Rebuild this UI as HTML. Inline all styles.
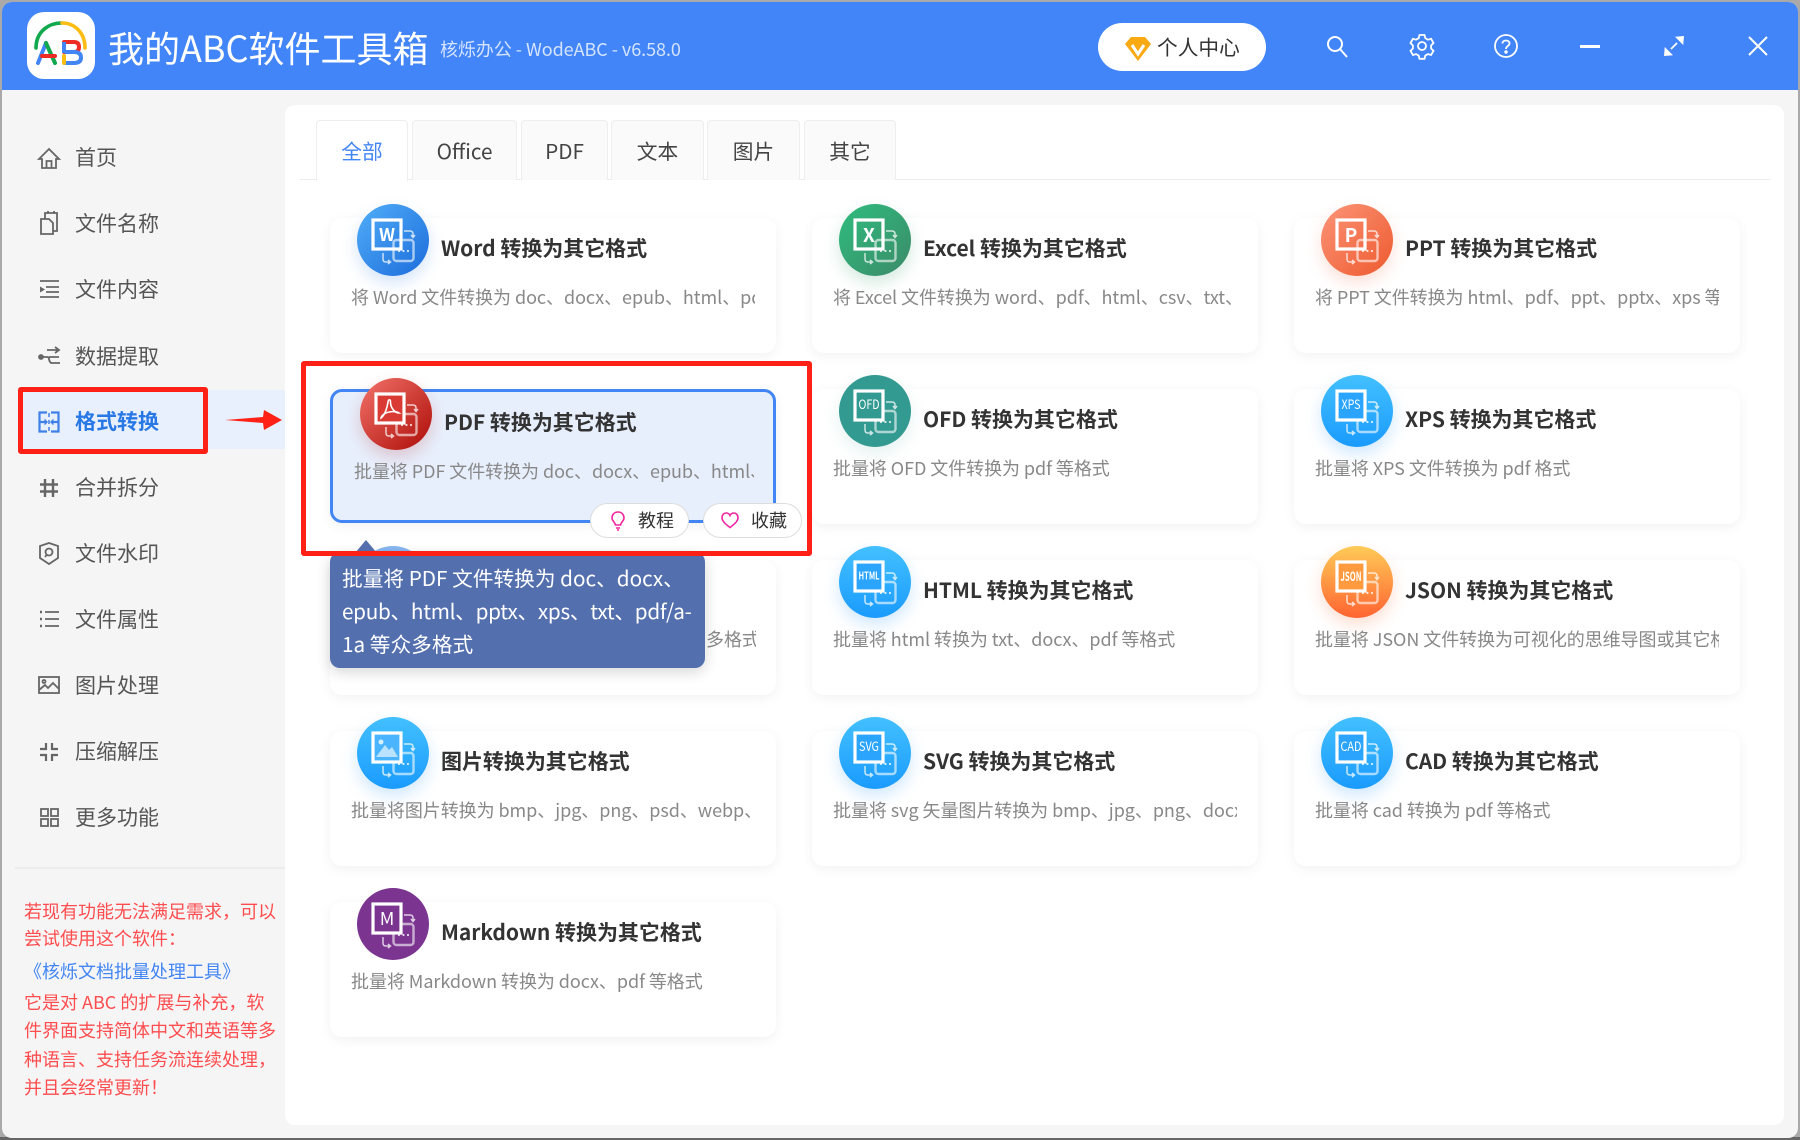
<!DOCTYPE html>
<html lang="zh-CN">
<head>
<meta charset="utf-8">
<title>我的ABC软件工具箱</title>
<style>
*{box-sizing:border-box;margin:0;padding:0}
html,body{width:1800px;height:1140px;overflow:hidden;background:#a9a9a9;font-family:"Noto Sans CJK SC","Liberation Sans",sans-serif}
#strip{position:absolute;left:0;top:1137px;width:1800px;height:3px;background:#666}
#win{position:absolute;left:2px;top:2px;width:1796px;height:1136px;background:#f5f5f5;border-radius:10px;overflow:hidden}
.a{position:absolute;white-space:nowrap}
svg{display:block;overflow:visible}
#hd{position:absolute;left:0;top:0;width:1800px;height:90px;background:#4285f8}
#root{position:absolute;left:0;top:0;width:1800px;height:1140px}
.nav{position:absolute;left:75px;font-size:21px;line-height:30px;color:#555;white-space:nowrap}
.ni{position:absolute;left:37px;width:24px;height:24px;fill:none;stroke:#666;stroke-width:1.8}
.tab{position:absolute;top:120px;height:60px;background:#fafafa;border:1px solid #eee;border-bottom:none;border-radius:4px 4px 0 0;font-size:20.7px;line-height:58px;text-align:center;color:#444}
.card{position:absolute;width:446px;height:135px;background:#fff;border-radius:12px;box-shadow:0 3px 12px rgba(0,0,0,.055)}
.ic{position:absolute;width:72px;height:72px;border-radius:50%}
.ic svg{position:absolute;left:0;top:0;width:72px;height:72px}
.t{position:absolute;font-size:21px;font-weight:700;color:#333;line-height:30px;white-space:nowrap;letter-spacing:-.04px}
.d{position:absolute;width:404px;overflow:hidden;font-size:18px;color:#888;line-height:28px;white-space:nowrap;letter-spacing:-.06px}
.blue{background:linear-gradient(180deg,#43c0ff,#1a9bfd);box-shadow:0 7px 16px rgba(40,150,250,.22)}
.red{position:absolute;left:0;width:1800px;font-size:18px;line-height:28px;color:#ff4d4f;white-space:nowrap;padding-left:24px}
.rb{position:absolute;border:5px solid #ff2116;border-radius:3px}
.pill{position:absolute;top:503px;height:35px;background:#fff;border:1px solid #ddd;border-radius:18px;font-size:18px;line-height:33px;color:#333;white-space:nowrap}
.lb{font-family:"Noto Sans CJK SC",sans-serif;fill:#fff}
</style>
</head>
<body>
<svg width="0" height="0" style="position:absolute">
<defs>
<symbol id="arr" viewBox="0 0 72 72">
<rect x="36.5" y="36" width="20" height="21" rx="3" fill="none" stroke="#fff" stroke-opacity=".6" stroke-width="2.4"/>
<path d="M47 27h6q3 0 3 3v3M54 31l2 2.500 2-2.500" fill="none" stroke="#fff" stroke-opacity=".75" stroke-width="1.500"/>
<path d="M26 49v6q0 3 3 3h4M31 56l2.500 2-2.500 2" fill="none" stroke="#fff" stroke-opacity=".75" stroke-width="1.500"/>
<circle cx="42" cy="47" r="1.100" fill="#fff" fill-opacity=".8"/><circle cx="46.500" cy="47" r="1.100" fill="#fff" fill-opacity=".8"/><circle cx="51" cy="47" r="1.100" fill="#fff" fill-opacity=".8"/>
</symbol>
</defs>
</svg>
<div id="strip"></div>
<div id="win">
<div id="root" style="left:-2px;top:-2px">
<div id="hd"></div>

<!-- logo -->
<svg class="a" style="left:27px;top:12px" width="68" height="67" viewBox="0 0 68 67">
<rect width="68" height="67" rx="17" fill="#fff"/>
<path d="M9 36C9 20 21 11 35 11" fill="none" stroke="#12a84d" stroke-width="3.600" stroke-linecap="round"/>
<path d="M35 11C48 11 58 21 58 36" fill="none" stroke="#fbbd12" stroke-width="3.600" stroke-linecap="round"/>
<path d="M11 51L19 31" fill="none" stroke="#4285f4" stroke-width="4" stroke-linecap="round"/>
<path d="M19 31L28 51" fill="none" stroke="#12a84d" stroke-width="4" stroke-linecap="round"/>
<path d="M15 44H28" fill="none" stroke="#ee2b24" stroke-width="4" stroke-linecap="round"/>
<path d="M37 30H47Q52 30 52 35T47 40H37" fill="none" stroke="#ee2b24" stroke-width="4" stroke-linecap="round"/>
<path d="M37 30V41" fill="none" stroke="#4285f4" stroke-width="4"/>
<path d="M39 40H47Q54 40 54 45.500T47 51H39" fill="none" stroke="#4285f4" stroke-width="4" stroke-linecap="round"/>
<path d="M37 44V51" fill="none" stroke="#fbbd12" stroke-width="4" stroke-linecap="round"/>
</svg>
<div class="a" style="left:108px;top:22px;font-size:36px;line-height:50px;color:#fff">我的ABC软件工具箱</div>
<div class="a" style="left:440px;top:35px;font-size:18px;line-height:28px;color:rgba(255,255,255,.78);letter-spacing:-.05px">核烁办公 - WodeABC - v6.58.0</div>

<!-- vip -->
<div class="a" style="left:1098px;top:23px;width:168px;height:48px;background:#fff;border-radius:24px"></div>
<svg class="a" style="left:1124px;top:36px" width="28" height="26" viewBox="0 0 28 26"><path d="M7 1H21L27 8 14 25 1 8Z" fill="#f9a911"/><path d="M8 9L14 18 20 9" fill="none" stroke="#fff" stroke-width="3"/></svg>
<div class="a" style="left:1157px;top:31px;font-size:20.7px;line-height:30px;color:#333">个人中心</div>

<!-- window icons -->
<svg class="a" style="left:1325px;top:34px" width="24" height="24" viewBox="0 0 24 24" fill="none" stroke="#fff" stroke-width="2"><circle cx="10" cy="10" r="7"/><path d="M15 15L22 23"/></svg>
<svg class="a" style="left:1410px;top:34px" width="24" height="24" viewBox="0 0 24 24" fill="none" stroke="#fff" stroke-width="1.800"><path d="M9.500 1.500h5l.8 3.200 2.600 1.500 3.200-.9 2.400 4.200-2.400 2.500 0 3-0 0 2.400 2.300-2.400 4.200-3.200-.9-2.600 1.500-.8 3.200h-5l-.8-3.200-2.600-1.500-3.200.9L.5 17.300l2.400-2.300v-3L.5 9.500 2.900 5.300l3.200.9 2.600-1.500z" transform="translate(0 -.5)"/><circle cx="12" cy="12" r="4"/></svg>
<svg class="a" style="left:1494px;top:34px" width="24" height="24" viewBox="0 0 24 24" fill="none" stroke="#fff" stroke-width="1.800"><circle cx="12" cy="12" r="11"/><path d="M8.500 9.500C8.500 5.500 15.500 5.500 15.500 9.500 15.500 12 12 12 12 15"/><circle cx="12" cy="18" r=".8" fill="#fff"/></svg>
<div class="a" style="left:1580px;top:45px;width:20px;height:2.500px;background:#fff"></div>
<svg class="a" style="left:1662px;top:34px" width="24" height="24" viewBox="0 0 24 24" fill="none" stroke="#fff" stroke-width="1.800"><path d="M15 9L9 15"/><path d="M15 3.500L21 3 20.500 9Z" fill="#fff"/><path d="M3.500 15L3 21 9 20.500Z" fill="#fff"/></svg>
<svg class="a" style="left:1748px;top:36px" width="20" height="20" viewBox="0 0 20 20" fill="none" stroke="#fff" stroke-width="2"><path d="M1 1L19 19M19 1L1 19"/></svg>

<!-- sidebar -->
<div class="a" style="left:18px;top:390px;width:267px;height:59px;background:#e8f0fe;border-radius:8px 0 0 8px"></div>

<svg class="ni" style="top:146px" viewBox="0 0 24 24"><path d="M2 13L12 3 22 13H19V22H5V13Z"/><path d="M9.500 22V15H14.500V22"/></svg>
<div class="nav" style="top:141.500px">首页</div>
<svg class="ni" style="top:211px" viewBox="0 0 24 24"><path d="M4 8H12L16 12V23H4Z"/><path d="M8 8V2H20V20H16"/><path d="M11 2V0M17 2V0"/></svg>
<div class="nav" style="top:207.500px">文件名称</div>
<svg class="ni" style="top:277px" viewBox="0 0 24 24"><path d="M3 4H22M9 10H22M9 15H22M3 20H22"/><path d="M3 9.500L8 12.500 3 15.500Z" fill="#666" stroke="none"/></svg>
<div class="nav" style="top:273.500px">文件内容</div>
<svg class="ni" style="top:344px" viewBox="0 0 24 24"><path d="M10 6H22M18 3L22 6 18 9M4 13H10Q12 13 12 15T14 19H23M12 13H22"/><circle cx="4" cy="13" r="2" fill="#666"/></svg>
<div class="nav" style="top:340.500px">数据提取</div>
<svg class="ni" style="top:410px;stroke:#3f80e6;stroke-width:2.200" viewBox="0 0 24 24"><path d="M10 2.500H2.500V21.500H10M14 2.500H21.500V21.500H14"/><path d="M12 3V7M12 10V14M12 17V21" stroke-width="1.500"/><path d="M3 12H8M21 12H16"/><path d="M7.500 8.500L11 12 7.500 15.500ZM16.500 8.500L13 12 16.500 15.500Z" fill="#3f80e6" stroke="none"/></svg>
<div class="nav" style="top:405.500px;font-weight:700;color:#2878e6">格式转换</div>
<svg class="ni" style="top:476px;stroke-width:2.400" viewBox="0 0 24 24"><path d="M8 3V21M16 3V21M3 8.500H21M3 15.500H21"/></svg>
<div class="nav" style="top:471.500px">合并拆分</div>
<svg class="ni" style="top:541px" viewBox="0 0 24 24"><path d="M12 2L21 5V17L12 23 3 17V5Z"/><circle cx="12" cy="11" r="3.500"/><path d="M9.500 14L8 16"/></svg>
<div class="nav" style="top:537.500px">文件水印</div>
<svg class="ni" style="top:607px" viewBox="0 0 24 24"><path d="M8 5H22M8 12H22M8 19H22"/><path d="M3 5H5M3 12H5M3 19H5" stroke-width="2.400"/></svg>
<div class="nav" style="top:603.500px">文件属性</div>
<svg class="ni" style="top:673px" viewBox="0 0 24 24"><rect x="2" y="4" width="20" height="16"/><circle cx="7" cy="8.500" r="1.500"/><path d="M2 17L8 12 11 15 16 10 22 16"/></svg>
<div class="nav" style="top:670px">图片处理</div>
<svg class="ni" style="top:740px;stroke-width:2.200" viewBox="0 0 24 24"><path d="M9 3V9H3M15 3V9H21M3 15H9V21M21 15H15V21"/></svg>
<div class="nav" style="top:735.500px">压缩解压</div>
<svg class="ni" style="top:805px" viewBox="0 0 24 24"><rect x="4" y="4" width="7" height="7"/><rect x="14" y="4" width="7" height="7"/><rect x="4" y="14" width="7" height="7"/><rect x="14" y="14" width="7" height="7"/></svg>
<div class="nav" style="top:801.500px">更多功能</div>

<div class="a" style="left:15px;top:867px;width:270px;height:2px;background:#ececec"></div>
<div class="red" style="top:897px">若现有功能无法满足需求，可以</div>
<div class="red" style="top:924px">尝试使用这个软件：</div>
<div class="red" style="top:957px;color:#4285f4;padding-left:24px">《核烁文档批量处理工具》</div>
<div class="red" style="top:988px">它是对 ABC 的扩展与补充，软</div>
<div class="red" style="top:1016px">件界面支持简体中文和英语等多</div>
<div class="red" style="top:1045px">种语言、支持任务流连续处理，</div>
<div class="red" style="top:1073px">并且会经常更新！</div>

<!-- main panel -->
<div class="a" style="left:285px;top:105px;width:1499px;height:1020px;background:#fff;border-radius:10px"></div>
<div class="a" style="left:300px;top:179px;width:1470px;height:1px;background:#ececec"></div>
<div class="tab" style="left:316px;width:92px;background:#fff;color:#4285f4;height:61px;z-index:1">全部</div>
<div class="tab" style="left:412px;width:105px">Office</div>
<div class="tab" style="left:521px;width:87px">PDF</div>
<div class="tab" style="left:611px;width:93px">文本</div>
<div class="tab" style="left:707px;width:93px">图片</div>
<div class="tab" style="left:804px;width:92px">其它</div>

<!-- row 1 -->
<div class="card" style="left:330px;top:218px"></div>
<div class="ic" style="left:357px;top:204px;background:linear-gradient(135deg,#52aef8,#1b6cdb);box-shadow:0 7px 16px rgba(40,120,230,.2)"><svg viewBox="0 0 72 72"><use href="#arr" width="72" height="72"/><rect x="16" y="16" width="28" height="29" fill="none" stroke="#fff" stroke-width="3.200"/><text class="lb" x="30" y="37" text-anchor="middle" font-size="17.500" font-weight="700">W</text></svg></div>
<div class="t" style="left:441px;top:233px">Word 转换为其它格式</div>
<div class="d" style="left:351px;top:283px">将 Word 文件转换为 doc、docx、epub、html、pdf 等众多格式</div>

<div class="card" style="left:812px;top:218px"></div>
<div class="ic" style="left:839px;top:204px;background:linear-gradient(135deg,#2fbd7f,#3b8a68);box-shadow:0 7px 16px rgba(40,150,100,.2)"><svg viewBox="0 0 72 72"><use href="#arr" width="72" height="72"/><rect x="16" y="16" width="28" height="29" fill="none" stroke="#fff" stroke-width="3.200"/><text class="lb" x="30" y="38" text-anchor="middle" font-size="19" font-weight="700">X</text></svg></div>
<div class="t" style="left:923px;top:233px">Excel 转换为其它格式</div>
<div class="d" style="left:833px;top:283px">将 Excel 文件转换为 word、pdf、html、csv、txt、ods 等众多格式</div>

<div class="card" style="left:1294px;top:218px"></div>
<div class="ic" style="left:1321px;top:204px;background:linear-gradient(135deg,#fb9478,#ee5a2e);box-shadow:0 7px 16px rgba(240,100,60,.2)"><svg viewBox="0 0 72 72"><use href="#arr" width="72" height="72"/><rect x="16" y="16" width="28" height="29" fill="none" stroke="#fff" stroke-width="3.200"/><text class="lb" x="30" y="38" text-anchor="middle" font-size="19" font-weight="700">P</text></svg></div>
<div class="t" style="left:1405px;top:233px">PPT 转换为其它格式</div>
<div class="d" style="left:1315px;top:283px">将 PPT 文件转换为 html、pdf、ppt、pptx、xps 等众多格式</div>

<!-- row 2 -->
<div class="card" style="left:330px;top:389px;width:446px;height:134px;background:#e8effc;border:3px solid #4285f4"></div>
<div class="ic" style="left:360px;top:378px;background:linear-gradient(135deg,#f2736b,#ad0c06);box-shadow:0 7px 16px rgba(170,30,30,.2)"><svg viewBox="0 0 72 72"><use href="#arr" width="72" height="72"/><rect x="16" y="16" width="28" height="29" fill="#d93a34" stroke="#fff" stroke-width="3.200"/><path d="M21 40C25 37 27 30 28 24 28.500 21 30.500 21 30.500 24 30.500 30 35 35 39 35 36 33 29 33 24 36 22 37.500 21 39.500 21 40Z" fill="none" stroke="#fff" stroke-width="1.600"/></svg></div>
<div class="t" style="left:444px;top:407px">PDF 转换为其它格式</div>
<div class="d" style="left:354px;top:457px;width:400px">批量将 PDF 文件转换为 doc、docx、epub、html、pptx、xps</div>

<div class="card" style="left:812px;top:389px"></div>
<div class="ic" style="left:839px;top:375px;background:#339a92;box-shadow:0 7px 16px rgba(40,150,140,.12)"><svg viewBox="0 0 72 72"><use href="#arr" width="72" height="72"/><rect x="16" y="16" width="28" height="29" fill="#339a92" stroke="#fff" stroke-width="3.200"/><text class="lb" x="30" y="34" text-anchor="middle" font-size="13" textLength="21" lengthAdjust="spacingAndGlyphs">OFD</text></svg></div>
<div class="t" style="left:923px;top:404px">OFD 转换为其它格式</div>
<div class="d" style="left:833px;top:454px">批量将 OFD 文件转换为 pdf 等格式</div>

<div class="card" style="left:1294px;top:389px"></div>
<div class="ic blue" style="left:1321px;top:375px"><svg viewBox="0 0 72 72"><use href="#arr" width="72" height="72"/><rect x="16" y="16" width="28" height="29" fill="#2aa4fd" stroke="#fff" stroke-width="3.200"/><text class="lb" x="30" y="34" text-anchor="middle" font-size="13" textLength="19" lengthAdjust="spacingAndGlyphs">XPS</text></svg></div>
<div class="t" style="left:1405px;top:404px">XPS 转换为其它格式</div>
<div class="d" style="left:1315px;top:454px">批量将 XPS 文件转换为 pdf 格式</div>

<!-- row 3 -->
<div class="card" style="left:330px;top:560px"></div>
<div class="ic" style="left:357px;top:546px;background:linear-gradient(180deg,#8ab8f2,#5a9bf0)"></div>
<div class="d" style="left:706px;top:625px;width:50px">多格式</div>

<div class="card" style="left:812px;top:560px"></div>
<div class="ic blue" style="left:839px;top:546px"><svg viewBox="0 0 72 72"><use href="#arr" width="72" height="72"/><rect x="16" y="16" width="28" height="29" fill="#2aa4fd" stroke="#fff" stroke-width="3.200"/><text class="lb" x="30" y="33.500" text-anchor="middle" font-size="10.500" font-weight="700" textLength="21" lengthAdjust="spacingAndGlyphs">HTML</text></svg></div>
<div class="t" style="left:923px;top:575px">HTML 转换为其它格式</div>
<div class="d" style="left:833px;top:625px">批量将 html 转换为 txt、docx、pdf 等格式</div>

<div class="card" style="left:1294px;top:560px"></div>
<div class="ic" style="left:1321px;top:546px;background:linear-gradient(180deg,#ffcb57,#ff6432);box-shadow:0 7px 16px rgba(250,110,50,.22)"><svg viewBox="0 0 72 72"><use href="#arr" width="72" height="72"/><rect x="16" y="16" width="28" height="29" fill="#ff9a3e" stroke="#fff" stroke-width="3.200"/><text class="lb" x="30" y="35" text-anchor="middle" font-size="13" font-weight="700" textLength="21" lengthAdjust="spacingAndGlyphs">JSON</text></svg></div>
<div class="t" style="left:1405px;top:575px">JSON 转换为其它格式</div>
<div class="d" style="left:1315px;top:625px">批量将 JSON 文件转换为可视化的思维导图或其它格式文件</div>

<!-- row 4 -->
<div class="card" style="left:330px;top:731px"></div>
<div class="ic blue" style="left:357px;top:717px"><svg viewBox="0 0 72 72"><use href="#arr" width="72" height="72"/><rect x="16" y="16" width="28" height="29" fill="#4bb4ff" stroke="#fff" stroke-width="3.200"/><circle cx="24" cy="25" r="2.500" fill="#d4efff"/><path d="M19 40L28 28 32 33 35 30 41 40Z" fill="#b9e3ff"/></svg></div>
<div class="t" style="left:441px;top:746px">图片转换为其它格式</div>
<div class="d" style="left:351px;top:796px">批量将图片转换为 bmp、jpg、png、psd、webp、tiff 等格式</div>

<div class="card" style="left:812px;top:731px"></div>
<div class="ic blue" style="left:839px;top:717px"><svg viewBox="0 0 72 72"><use href="#arr" width="72" height="72"/><rect x="16" y="16" width="28" height="29" fill="#2aa4fd" stroke="#fff" stroke-width="3.200"/><text class="lb" x="30" y="34" text-anchor="middle" font-size="13" textLength="20" lengthAdjust="spacingAndGlyphs">SVG</text></svg></div>
<div class="t" style="left:923px;top:746px">SVG 转换为其它格式</div>
<div class="d" style="left:833px;top:796px">批量将 svg 矢量图片转换为 bmp、jpg、png、docx 等格式</div>

<div class="card" style="left:1294px;top:731px"></div>
<div class="ic blue" style="left:1321px;top:717px"><svg viewBox="0 0 72 72"><use href="#arr" width="72" height="72"/><rect x="16" y="16" width="28" height="29" fill="#2aa4fd" stroke="#fff" stroke-width="3.200"/><text class="lb" x="30" y="34" text-anchor="middle" font-size="13" textLength="21" lengthAdjust="spacingAndGlyphs">CAD</text></svg></div>
<div class="t" style="left:1405px;top:746px">CAD 转换为其它格式</div>
<div class="d" style="left:1315px;top:796px">批量将 cad 转换为 pdf 等格式</div>

<!-- row 5 -->
<div class="card" style="left:330px;top:902px"></div>
<div class="ic" style="left:357px;top:888px;background:#7b3590"><svg viewBox="0 0 72 72"><use href="#arr" width="72" height="72"/><rect x="16" y="16" width="28" height="29" fill="#7b3590" stroke="#fff" stroke-width="3.200"/><text class="lb" x="30" y="37" text-anchor="middle" font-size="18">M</text></svg></div>
<div class="t" style="left:441px;top:917px">Markdown 转换为其它格式</div>
<div class="d" style="left:351px;top:967px">批量将 Markdown 转换为 docx、pdf 等格式</div>

<!-- pills -->
<div class="pill" style="left:590px;width:99px;padding-left:47px">教程</div>
<svg class="a" style="left:611px;top:511px" width="14" height="20" viewBox="0 0 14 20" fill="none" stroke="#f0259f" stroke-width="1.600"><path d="M7 1C3 1 1 4 1 7 1 10 4 11 4.500 14H9.500C10 11 13 10 13 7 13 4 11 1 7 1Z"/><path d="M5 17H9M6 19H8"/></svg>
<div class="pill" style="left:703px;width:99px;padding-left:47px">收藏</div>
<svg class="a" style="left:721px;top:512px" width="18" height="17" viewBox="0 0 18 17" fill="none" stroke="#f0259f" stroke-width="1.600"><path d="M9 15.500C3 11 1 8.500 1 5.500 1 3 3 1 5 1 7 1 8.300 2 9 3.500 9.700 2 11 1 13 1 15 1 17 3 17 5.500 17 8.500 15 11 9 15.500Z"/></svg>

<!-- tooltip -->
<div class="a" style="left:330px;top:552px;width:375px;height:116px;background:#536fad;border-radius:10px;box-shadow:0 4px 14px rgba(0,0,0,.16)"></div>
<svg class="a" style="left:355px;top:540px" width="22" height="13" viewBox="0 0 22 13"><path d="M11 0L22 13H0Z" fill="#536fad"/></svg>
<div class="a" style="left:342px;top:561px;font-size:20.7px;line-height:33px;color:#fff">批量将 PDF 文件转换为 doc、docx、<br><span style="letter-spacing:-.28px">epub、html、pptx、xps、txt、pdf/a-</span><br>1a 等众多格式</div>

<!-- red annotation -->
<div class="rb" style="left:18px;top:387px;width:190px;height:67px"></div>
<div class="rb" style="left:301px;top:361px;width:511px;height:195px"></div>
<svg class="a" style="left:225px;top:408px" width="58" height="24" viewBox="0 0 58 24"><path d="M0 12L38 9 39 2 57 12 39 22 38 15Z" fill="#ff2116"/></svg>
</div>
</div>
</body>
</html>
